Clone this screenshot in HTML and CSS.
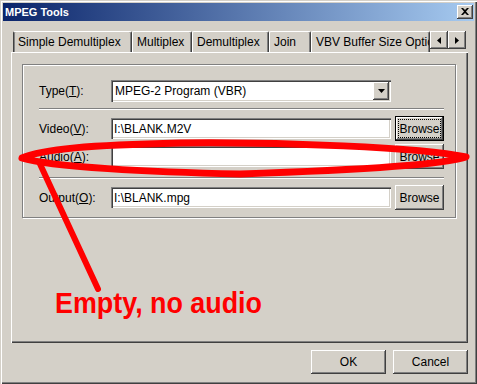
FILE: index.html
```html
<!DOCTYPE html>
<html lang="en">
<head>
    <meta charset="UTF-8">
    <title>MPEG Tools</title>
    <link rel="stylesheet" href="styles.css">
</head>
<body>
    <div class="window">
        <div class="titlebar">
            <span class="title">MPEG Tools</span>
            <button class="close raised">
                <svg width="8" height="7" viewBox="0 0 8 7"><path d="M0 0h2l2 2 2-2h2L5 3.5 8 7H6L4 5 2 7H0l3-3.5z" fill="#000"/></svg>
            </button>
        </div>
        <div class="tabs">
            <div class="tab first" style="width: 119px">Simple Demultiplex</div>
            <div class="tab" style="width: 60px">Multiplex</div>
            <div class="tab" style="width: 77px">Demultiplex</div>
            <div class="tab" style="width: 42px">Join</div>
            <div class="tab" style="width: 119px">VBV Buffer Size Options</div>
            <div class="scroll">
                <button class="arrow raised">
                    <svg width="4" height="7" viewBox="0 0 4 7"><path d="M4 0V7L0 3.5z" fill="#000"/></svg>
                </button>
                <button class="arrow raised">
                    <svg width="4" height="7" viewBox="0 0 4 7"><path d="M0 0V7L4 3.5z" fill="#000"/></svg>
                </button>
            </div>
        </div>
        <div class="panel">
            <div class="group">
                <div class="row short">
                    <label>Type(<u>T</u>):</label>
                    <div class="combo">
                        <span class="value">MPEG-2 Program (VBR)</span>
                        <span class="drop raised">
                            <svg width="7" height="4" viewBox="0 0 7 4"><path d="M0 0H7L3.5 4z" fill="#000"/></svg>
                        </span>
                    </div>
                </div>
                <div class="sep"></div>
                <div class="row">
                    <label>Video(<u>V</u>):</label>
                    <div class="field">I:\BLANK.M2V</div>
                    <button class="browse raised default"><span class="focus">Browse</span></button>
                </div>
                <div class="row">
                    <label>Audio(<u>A</u>):</label>
                    <div class="field"></div>
                    <button class="browse raised"><span>Browse</span></button>
                </div>
                <div class="sep low"></div>
                <div class="row">
                    <label>Output(<u>O</u>):</label>
                    <div class="field">I:\BLANK.mpg</div>
                    <button class="browse raised"><span>Browse</span></button>
                </div>
            </div>
        </div>
        <div class="footer">
            <button class="action raised">OK</button>
            <button class="action raised">Cancel</button>
        </div>

        <!-- red markup drawn on top of the dialog -->
        <svg class="markup" width="477" height="384" viewBox="0 0 477 384">
            <path d="M22 158C42 149 90 145 180 143C280 142 420 147 466 157C440 166 330 171 240 174C150 172 50 167 22 158Z" fill="none" stroke="#f00" stroke-width="7" stroke-linejoin="round"/>
            <path d="M40 164L98 289" stroke="#f00" stroke-width="6" stroke-linecap="round"/>
            <text x="55" y="313" class="note" textLength="207" lengthAdjust="spacingAndGlyphs">Empty, no audio</text>
        </svg>
    </div>
</body>
</html>
```

FILE: styles.css
```css
body {
    margin: 0;
    background-color: #d4d0c8;
    font-family: "Liberation Sans", Arial, sans-serif;
    font-size: 12px;
    color: #000;
}
button {
    font: inherit;
    color: #000;
    border: 0;
    padding: 0;
    margin: 0;
    background-color: #d4d0c8;
}
.raised {
    box-shadow: inset -1px -1px #404040, inset 1px 1px #fff, inset -2px -2px #808080;
}
.window {
    position: relative;
    width: 477px;
    height: 384px;
    box-sizing: border-box;
    padding: 3px;
    background-color: #d4d0c8;
    box-shadow: inset 1px 1px #d4d0c8, inset 2px 2px #fff, inset -1px -1px #404040, inset -2px -2px #808080;
    overflow: hidden;
}
.titlebar {
    display: flex;
    align-items: center;
    height: 18px;
    padding: 0 1px 0 2px;
    background: linear-gradient(to right, #0a246a, #a6caf0);
}
.title {
    color: #fff;
    font-weight: bold;
    font-size: 11px;
}
.close {
    display: flex;
    align-items: center;
    justify-content: center;
    margin-left: auto;
    width: 16px;
    height: 14px;
    padding-bottom: 1px;
}
.tabs {
    display: flex;
    height: 21px;
    margin: 10px 0 0 10px;
}
.tab {
    box-sizing: border-box;
    height: 21px;
    padding: 3px 0 0 4px;
    line-height: 14px;
    border-top: 1px solid #fff;
    border-left: 1px solid #fff;
    border-right: 1px solid #404040;
    border-radius: 2px 2px 0 0;
    box-shadow: inset -1px 0 #808080;
    white-space: nowrap;
    overflow: hidden;
}
.tab.first {
    border-left-color: #404040;
    box-shadow: inset -1px 0 #808080, inset 1px 0 #808080;
}
.scroll {
    display: flex;
}
.arrow {
    display: flex;
    align-items: center;
    justify-content: center;
    width: 18px;
    height: 18px;
}
.panel {
    box-sizing: border-box;
    width: 457px;
    height: 291px;
    margin-left: 8px;
    padding: 12px 0 0 11px;
    box-shadow: inset 1px 1px #fff, inset -1px -1px #404040, inset -2px -2px #808080;
}
.group {
    box-sizing: border-box;
    width: 434px;
    height: 154px;
    padding: 15px 0 0 16px;
    border: 1px solid #808080;
    box-shadow: inset 1px 1px #fff, 1px 1px #fff;
}
.row {
    display: grid;
    grid-template-columns: 68px 280px 49px;
    column-gap: 4px;
    align-items: center;
    height: 25px;
}
.row + .row {
    margin-top: 3px;
}
.row.short {
    height: 22px;
}
.sep {
    width: 405px;
    margin: 6px 0;
    border-top: 1px solid #808080;
    border-bottom: 1px solid #fff;
}
.sep.low {
    margin-top: 8px;
}
.field {
    box-sizing: border-box;
    height: 21px;
    padding: 4px 0 0 3px;
    line-height: 14px;
    background-color: #fff;
    box-shadow: inset 1px 1px #808080, inset 2px 2px #404040, inset -1px -1px #fff, inset -2px -2px #d4d0c8;
    white-space: nowrap;
}
.combo {
    box-sizing: border-box;
    display: flex;
    align-items: center;
    height: 22px;
    padding: 2px;
    background-color: #fff;
    box-shadow: inset 1px 1px #808080, inset 2px 2px #404040, inset -1px -1px #fff, inset -2px -2px #d4d0c8;
}
.combo .value {
    flex: 1;
    padding-left: 2px;
    line-height: 14px;
}
.drop {
    display: flex;
    align-items: center;
    justify-content: center;
    width: 16px;
    height: 18px;
    background-color: #d4d0c8;
}
.browse {
    display: flex;
    box-sizing: border-box;
    width: 49px;
    height: 25px;
    padding: 3px;
}
.browse span {
    flex: 1;
    display: flex;
    align-items: center;
    justify-content: center;
    border: 1px solid transparent;
}
.browse.default {
    border: 1px solid #000;
}
.browse .focus {
    border: 1px dotted #000;
    margin: -1px;
}
.footer {
    display: flex;
    justify-content: flex-end;
    gap: 7px;
    margin-top: 7px;
    padding-right: 6px;
}
.action {
    width: 75px;
    height: 24px;
    padding-bottom: 1px;
}
.markup {
    position: absolute;
    left: 0;
    top: 0;
    pointer-events: none;
}
.note {
    font-family: "Liberation Sans", Arial, sans-serif;
    font-weight: bold;
    font-size: 29px;
    fill: #f00;
}
```
